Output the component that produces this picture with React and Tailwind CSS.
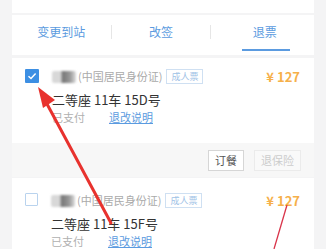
import React from "react";

function Check({ checked }) {
  if (checked) {
    return (
      <div className="w-[14px] h-[14px] bg-[#3d8fe3] rounded-[1px] flex items-center justify-center shrink-0">
        <svg width="10" height="10" viewBox="0 0 10 10">
          <path d="M1.5 5.2 L4 7.5 L8.6 2.6" fill="none" stroke="#fff" strokeWidth="1.5" />
        </svg>
      </div>
    );
  }
  return <div className="w-[13px] h-[13px] border border-[#b9d3ee] rounded-[1px] shrink-0" />;
}

function Passenger({ checked, seat }) {
  return (
    <div className="flex pl-[13px] pr-[12px]">
      <Check checked={checked} />
      <div className="ml-[13px] flex-1">
        <div className="flex items-center h-[15px]">
          <span className="w-[24px] h-[12px] rounded-[2px] blur-[1px] bg-[linear-gradient(90deg,#d8d8d8_0%,#d8d8d8_35%,#777_45%,#999_75%,#ddd_100%)]" />
          <span className="ml-[2px] text-[11px] text-[#aaa]">(中国居民身份证)</span>
          <span className="ml-[4px] h-[15px] px-[4px] border border-[#cfe0f2] text-[9px] text-[#9fc2e6] leading-[13px]">成人票</span>
          <span className="ml-auto mr-[2px] text-[13px] font-semibold text-[#f6b04a]">¥ 127</span>
        </div>
        <div className="mt-[7px] text-[13px] text-[#333] leading-[18px]">二等座 11车 {seat}号</div>
        <div className="flex text-[11px] leading-[16px]">
          <span className="text-[#b0b0b0]">已支付</span>
          <span className="ml-[24px] text-[#5b9be0] underline">退改说明</span>
        </div>
      </div>
    </div>
  );
}

export default function App() {
  return (
    <div
      className="relative w-[326px] h-[249px] overflow-hidden bg-[#f4f4f5]"
      style={{ fontFamily: '"Noto Sans CJK SC", "Noto Sans", sans-serif' }}
    >
      <div className="mx-[12px] h-[13px] bg-white" />
      <div className="mx-[12px] mt-[2px] h-[40px] bg-white flex items-start pt-[8px] text-[12px] text-[#5b9be0] relative">
        <div className="flex-1 text-center leading-[18px]">变更到站</div>
        <div className="mt-[2px] w-px h-[14px] bg-[#e6e6e6]" />
        <div className="flex-1 text-center leading-[18px]">改签</div>
        <div className="mt-[2px] w-px h-[14px] bg-[#e6e6e6]" />
        <div className="flex-1 text-center leading-[18px] pl-[4px]">退票</div>
        <div className="absolute left-[230px] bottom-[4px] w-[48px] h-[2px] bg-[#5b9be0]" />
      </div>

      <div className="mx-[12px] mt-[3px] bg-white">
        <div className="pt-[11px] h-[85px]">
          <Passenger checked seat="15D" />
        </div>
        <div className="h-[34px] bg-[#f7f7f7] flex items-center justify-end gap-[10px] pr-[13px]">
          <div className="h-[21px] px-[6px] border border-[#d6d6d6] bg-white text-[11px] text-[#555] leading-[19px]">订餐</div>
          <div className="h-[21px] px-[6px] border border-[#ebebeb] bg-[#f9f9f9] text-[11px] text-[#ccc] leading-[19px]">退保险</div>
        </div>
      </div>

      <div className="mx-[12px] mt-px bg-white pt-[15px] h-[80px]">
        <Passenger seat="15F" />
      </div>

      <svg className="absolute left-0 top-0" width="326" height="249" viewBox="0 0 326 249">
        <path d="M47 104 L111 223" stroke="#e8322e" strokeWidth="3" strokeLinecap="round" />
        <polygon points="38,87 55,100 43,108" fill="#e8322e" />
        <path d="M287 205 L274 249" stroke="#d9344a" strokeWidth="1.3" />
      </svg>
    </div>
  );
}
